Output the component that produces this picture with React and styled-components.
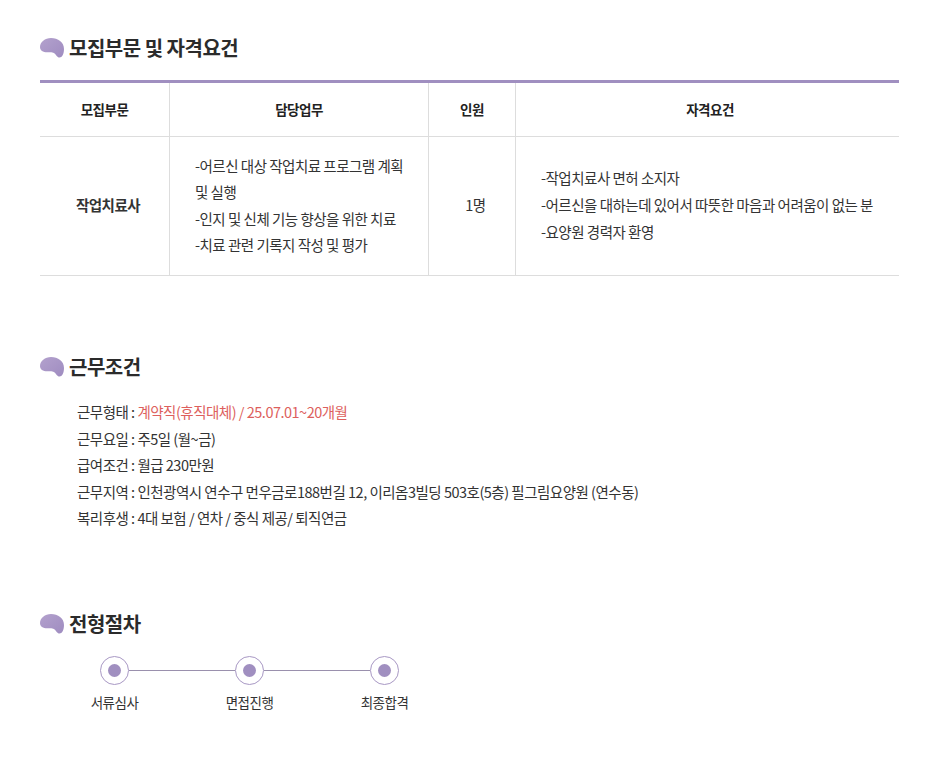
import React from "react";
import styled, { createGlobalStyle } from "styled-components";

const Global = createGlobalStyle`
  html, body { margin: 0; padding: 0; background: #fff; }
  body { font-family: "Noto Sans CJK KR", "Noto Sans", sans-serif; color: #222; }
`;
const Page = styled.div`
  width: 933px; height: 779px; box-sizing: border-box; padding: 33px 34px 0 40px; overflow: hidden;
`;
const Section = styled.section`
  margin-bottom: ${(p) => p.$gap}px;
`;
const Heading = styled.h2`
  display: flex; align-items: center; gap: 5px; margin: 0; height: 30px;
  font-size: 20px; line-height: 30px; font-weight: 700; letter-spacing: -0.5px; color: #2b2b2b;
`;
const Blob = () => (
  <svg width="24" height="20" viewBox="0 0 24 20" aria-hidden="true">
    <defs>
      <linearGradient id="blobFill" x1="0" y1="0" x2="1" y2="1">
        <stop offset="0" stopColor="#b3a1cd" />
        <stop offset="1" stopColor="#9f8cc0" />
      </linearGradient>
    </defs>
    <path
      d="M0 9C0 4 5 0 11 0c7 0 13 4 13 11 0 5-2 8.500-4.500 8.500-2.500 0-3.200-2.800-5.300-4.300-2-1.300-4-.9-7-.9C3 14.300 0 12.500 0 9Z"
      fill="url(#blobFill)"
    />
  </svg>
);
const Table = styled.div`
  margin-top: 17px; border-top: 3px solid #a08fc0; display: grid;
  grid-template-columns: 129px 259px 87px 384px; border-bottom: 1px solid #ddd;
`;
const HeadCell = styled.div`
  height: 54px; display: flex; align-items: center; justify-content: center;
  padding-left: ${(p) => p.$nudge || 0}px; padding-bottom: 1px; box-sizing: border-box;
  font-size: 13.5px; font-weight: 700; letter-spacing: -0.5px; color: #222;
  border-bottom: 1px solid #ddd;
  &:not(:first-child) { border-left: 1px solid #ddd; }
`;
const BodyCell = styled.div`
  height: 138px; box-sizing: border-box; display: flex; align-items: center;
  justify-content: ${(p) => (p.$center ? "center" : "flex-start")};
  padding-left: ${(p) => p.$pad || 0}px;
  padding-right: ${(p) => (p.$center ? 0 : 20)}px;
  padding-bottom: ${(p) => p.$lift ?? 2}px;
  font-size: 14.5px; letter-spacing: -0.5px; line-height: ${(p) => p.$lh || 26.6}px; color: #333;
  font-weight: ${(p) => (p.$bold ? 700 : 400)};
  border-left: ${(p) => (p.$first ? "none" : "1px solid #ddd")};
`;
const Lines = styled.div`
  white-space: pre-line;
`;
const Terms = styled.ul`
  list-style: none; margin: 17px 0 0; padding: 0 0 0 37px;
  font-size: 14.5px; line-height: 26.6px; letter-spacing: -0.5px; color: #333;
`;
const Accent = styled.span`
  color: #dd5f5d;
`;
const Steps = styled.div`
  display: flex; margin-top: 17px; margin-left: 27px;
`;
const Step = styled.div`
  width: 135px; flex: none; display: flex; flex-direction: column; align-items: flex-start;
  position: relative;
  &:not(:last-child)::after {
    content: ""; position: absolute; left: 62px; top: 14px; height: 1px;
    width: 106px; background: #9a90ad;
  }
`;
const Ring = styled.div`
  width: 29px; height: 29px; box-sizing: border-box; margin-left: 33px;
  border: 1px solid #a898c4; border-radius: 50%; display: flex; align-items: center; justify-content: center;
  &::before { content: ""; width: 13px; height: 13px; border-radius: 50%; background: #a08fc0; }
`;
const StepLabel = styled.div`
  width: 95px; text-align: center; margin-top: 7px;
  font-size: 13.5px; line-height: 20px; letter-spacing: -0.5px; color: #333;
`;

export default function App() {
  return (
    <Page>
      <Global />
      <Section $gap={76}>
        <Heading><Blob />모집부문 및 자격요건</Heading>
        <Table>
          <HeadCell>모집부문</HeadCell>
          <HeadCell>담당업무</HeadCell>
          <HeadCell>인원</HeadCell>
          <HeadCell $nudge={5}>자격요건</HeadCell>
          <BodyCell $first $center $bold $pad={7}>작업치료사</BodyCell>
          <BodyCell $pad={25} $lh={26.4} $lift={1}>
            <Lines>{"-어르신 대상 작업치료 프로그램 계획 및 실행\n-인지 및 신체 기능 향상을 위한 치료\n-치료 관련 기록지 작성 및 평가"}</Lines>
          </BodyCell>
          <BodyCell $center $pad={7}>1명</BodyCell>
          <BodyCell $pad={25} $lh={27} $lift={4}>
            <Lines>{"-작업치료사 면허 소지자\n-어르신을 대하는데 있어서 따뜻한 마음과 어려움이 없는 분\n-요양원 경력자 환영"}</Lines>
          </BodyCell>
        </Table>
      </Section>
      <Section $gap={77}>
        <Heading><Blob />근무조건</Heading>
        <Terms>
          <li>근무형태 : <Accent>계약직(휴직대체) / 25.07.01~20개월</Accent></li>
          <li>근무요일 : 주5일 (월~금)</li>
          <li>급여조건 : 월급 230만원</li>
          <li>근무지역 : 인천광역시 연수구 먼우금로188번길 12, 이리옴3빌딩 503호(5층) 필그림요양원 (연수동)</li>
          <li>복리후생 : 4대 보험 / 연차 / 중식 제공/ 퇴직연금</li>
        </Terms>
      </Section>
      <Section $gap={0}>
        <Heading><Blob />전형절차</Heading>
        <Steps>
          <Step><Ring /><StepLabel>서류심사</StepLabel></Step>
          <Step><Ring /><StepLabel>면접진행</StepLabel></Step>
          <Step><Ring /><StepLabel>최종합격</StepLabel></Step>
        </Steps>
      </Section>
    </Page>
  );
}
